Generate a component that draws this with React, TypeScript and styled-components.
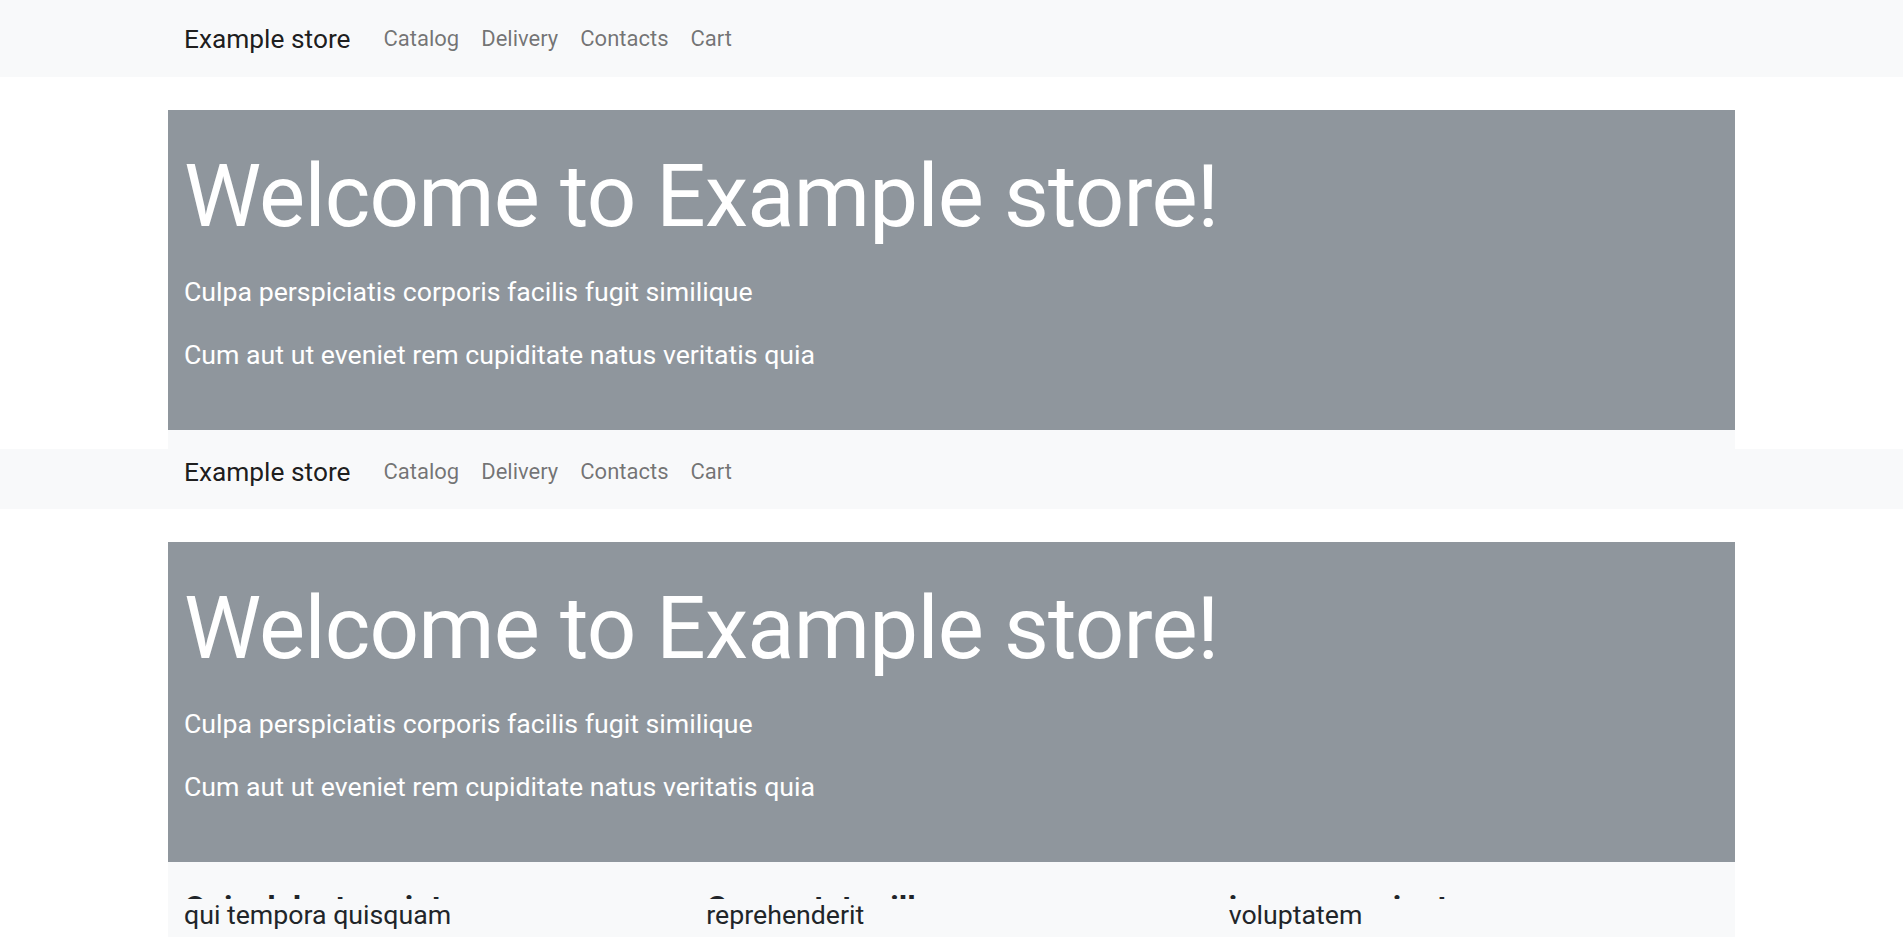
import React from 'react';
import styled, { createGlobalStyle } from 'styled-components';

const GlobalStyle = createGlobalStyle`
  body {
    margin: 0;
    background: #ffffff;
    font-family: Roboto, "Noto Sans", sans-serif;
    color: #212529;
  }
`;

const links = ['Catalog', 'Delivery', 'Contacts', 'Cart'];

const features = [
  { title: 'Quia delectus sint', text: 'qui tempora quisquam' },
  { title: 'Consectetur illo', text: 'reprehenderit' },
  { title: 'ipsam nesciunt', text: 'voluptatem' },
];

interface NavProps {
  height: number;
  offset: number;
}

const NavBar = ({ height, offset }: NavProps) => (
  <NavWrap $height={height}>
    <NavInner $offset={offset}>
      <Brand>Example store</Brand>
      <NavList>
        {links.map((l) => (
          <NavLink key={l}>{l}</NavLink>
        ))}
      </NavList>
    </NavInner>
  </NavWrap>
);

const Jumbotron = () => (
  <Jumbo>
    <Title>Welcome to Example store!</Title>
    <Lead>Culpa perspiciatis corporis facilis fugit similique</Lead>
    <Lead>Cum aut ut eveniet rem cupiditate natus veritatis quia</Lead>
  </Jumbo>
);

export default function App() {
  return (
    <>
      <GlobalStyle />
      <NavBar height={77} offset={24} />
      <Container $top={33}>
        <Jumbotron />
        <Strip />
      </Container>
      <NavBar height={60} offset={8} />
      <Container $top={33}>
        <Jumbotron />
        <Features>
          {features.map((f) => (
            <Feature key={f.text}>
              <HeadingClip>
                <FeatureTitle>{f.title}</FeatureTitle>
              </HeadingClip>
              <FeatureText>{f.text}</FeatureText>
            </Feature>
          ))}
        </Features>
      </Container>
    </>
  );
}

const NavWrap = styled.nav<{ $height: number }>`
  height: ${(p) => p.$height}px;
  background: #f8f9fa;
`;

const NavInner = styled.div<{ $offset: number }>`
  max-width: 1567px;
  margin: 0 auto;
  padding: ${(p) => p.$offset}px 16px 0;
  box-sizing: border-box;
  display: flex;
  align-items: center;
  line-height: 30px;
`;

const Brand = styled.a`
  font-size: 26.3px;
  color: rgba(0, 0, 0, 0.9);
  margin-right: 22px;
  white-space: nowrap;
`;

const NavList = styled.div`
  display: flex;
`;

const NavLink = styled.a`
  font-size: 22px;
  color: rgba(0, 0, 0, 0.55);
  padding: 0 11px;
`;

const Container = styled.div<{ $top: number }>`
  max-width: 1567px;
  margin: ${(p) => p.$top}px auto 0;
`;

const Jumbo = styled.section`
  height: 320px;
  box-sizing: border-box;
  background: #8f969d;
  color: #ffffff;
  padding: 43px 16px 0;
  display: flex;
  flex-direction: column;
`;

const Title = styled.h1`
  margin: 0 0 37px;
  font-size: 87px;
  font-weight: 400;
  line-height: 1;
  letter-spacing: -0.8px;
  white-space: nowrap;
`;

const Lead = styled.p`
  margin: 0 0 33px;
  font-size: 26.7px;
  line-height: 30px;
  white-space: nowrap;
`;

const Strip = styled.div`
  height: 19px;
  background: #f8f9fa;
`;

const Features = styled.div`
  display: grid;
  grid-template-columns: repeat(3, 1fr);
  background: #f8f9fa;
  padding-top: 33px;
  min-height: 75px;
`;

const Feature = styled.div`
  padding: 0 16px;
`;

const HeadingClip = styled.div`
  height: 4px;
  overflow: hidden;
`;

const FeatureTitle = styled.h2`
  margin: -4px 0 0;
  font-size: 32px;
  font-weight: 700;
  line-height: 1;
  white-space: nowrap;
`;

const FeatureText = styled.p`
  margin: 0;
  font-size: 26.7px;
  line-height: 32px;
  white-space: nowrap;
`;
